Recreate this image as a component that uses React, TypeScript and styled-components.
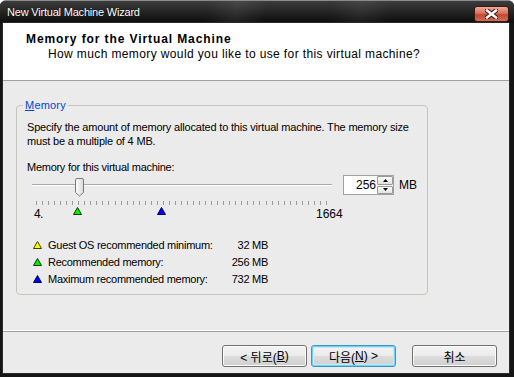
import React from "react";
import styled, { createGlobalStyle } from "styled-components";

const GlobalStyle = createGlobalStyle`
  html, body {
    margin: 0;
    padding: 0;
    background: #ffffff;
  }
  body {
    font-family: "Liberation Sans", "Noto Sans CJK KR", sans-serif;
    font-size: 11px;
    color: #000;
  }
`;

const MIN = 4;
const MAX = 1664;
const VALUE = 256;
const SCALE_LEFT = 33;
const SCALE_WIDTH = 293;
// page x of the slider / scale origin inside the group box
const ORIGIN = 17;

const pos = (mb: number) => SCALE_LEFT + ((mb - MIN) / (MAX - MIN)) * SCALE_WIDTH;

const Window = styled.div`
  width: 514px;
  height: 377px;
  display: flex;
  flex-direction: column;
  background: #151515;
  border-radius: 6px 6px 0 0;
  overflow: hidden;
  box-sizing: border-box;
  border-top: 1px solid #8a8a8a;
`;

const TitleBar = styled.div`
  height: 22px;
  flex: none;
  display: flex;
  align-items: center;
  justify-content: space-between;
  padding: 0 5px 0 7px;
  background:
    linear-gradient(100deg, transparent 0 40%, rgba(255, 255, 255, 0.07) 46%, transparent 52% 64%, rgba(255, 255, 255, 0.06) 70%, transparent 76%),
    linear-gradient(180deg, #3c3c3c 0%, #262626 45%, #0c0c0c 100%);
`;

const TitleText = styled.span`
  color: #ffffff;
  font-size: 11px;
  letter-spacing: -0.2px;
  text-shadow: 0 0 1px #000;
`;

const CloseButton = styled.div`
  width: 33px;
  height: 14px;
  margin-top: 4px;
  border: 1px solid #3a1a14;
  border-radius: 3px;
  background: linear-gradient(180deg, #f0a898 0%, #d8705c 45%, #c04a34 55%, #d06c58 100%);
  display: flex;
  align-items: center;
  justify-content: center;
`;

const Frame = styled.div`
  flex: 1;
  display: flex;
  flex-direction: column;
  margin: 0 5px 4px 3px;
  box-shadow: 0 0 0 1px #2a2a2a;
  min-height: 0;
`;

const Header = styled.div`
  height: 58px;
  flex: none;
  background: #ffffff;
  border-bottom: 1px solid #a0a0a0;
  box-sizing: border-box;
  padding: 9px 0 0 23px;
`;

const Heading = styled.div`
  font-weight: bold;
  font-size: 12px;
  letter-spacing: 0.9px;
  line-height: 14px;
`;

const SubHeading = styled.div`
  margin: 1px 0 0 22px;
  font-size: 12px;
  line-height: 14px;
  letter-spacing: 0.38px;
`;

const Body = styled.div`
  flex: 1;
  background: #ebebeb;
  padding: 24px 0 0 13px;
  border-bottom: 1px solid #a0a0a0;
  box-shadow: inset 0 -1px 0 #ffffff;
`;

const GroupBox = styled.div`
  position: relative;
  width: 412px;
  height: 190px;
  box-sizing: border-box;
  border: 1px solid #c4c4bc;
  border-radius: 4px;
  padding: 14px 0 0 10px;
  letter-spacing: -0.27px;
`;

const GroupLegend = styled.span`
  position: absolute;
  top: -8px;
  left: 6px;
  padding: 0 2px;
  background: #ebebeb;
  color: #0046d5;
  line-height: 14px;
  letter-spacing: 0.2px;

  u {
    text-decoration: underline;
  }
`;

const Description = styled.div`
  line-height: 14px;
  width: 396px;
  letter-spacing: -0.18px;
`;

const FieldLabel = styled.div`
  margin-top: 12px;
  line-height: 14px;
`;

const SliderRow = styled.div`
  margin-top: 1px;
  display: flex;
  align-items: center;
  height: 20px;
`;

const SliderArea = styled.div`
  position: relative;
  width: 312px;
  height: 20px;
  margin-left: -10px;
`;

const Track = styled.div`
  position: absolute;
  left: 15px;
  top: 9px;
  width: 300px;
  height: 2px;
  background: #ffffff;
  border-top: 1px solid #a8a8a8;
  box-sizing: border-box;
`;

const Thumb = styled.svg`
  position: absolute;
  top: 3px;
`;

const SpinBox = styled.div`
  margin-left: 14px;
  width: 51px;
  height: 20px;
  box-sizing: border-box;
  border: 1px solid #a0a0a0;
  background: #ffffff;
  display: flex;
  align-items: center;
  font-size: 12px;
  letter-spacing: 0;
`;

const SpinValue = styled.span`
  flex: 1;
  text-align: right;
  padding-right: 1px;
  line-height: 18px;
`;

const SpinButtons = styled.div`
  width: 16px;
  height: 18px;
  display: flex;
  flex-direction: column;
  gap: 1px;
`;

const SpinButton = styled.div`
  flex: 1;
  border: 1px solid #9a9a9a;
  border-radius: 1px;
  background: linear-gradient(180deg, #ffffff 0%, #e2e2e2 100%);
  display: flex;
  align-items: center;
  justify-content: center;
`;

const Unit = styled.span`
  margin-left: 5px;
  font-size: 12px;
  letter-spacing: 0;
`;

const Scale = styled.div`
  position: relative;
  height: 32px;
  margin-left: -10px;
`;

const Ticks = styled.svg`
  position: absolute;
  top: 6px;
  left: 0;
`;

const ScaleLabel = styled.span<{ $left: number }>`
  position: absolute;
  top: 12px;
  left: ${(p) => p.$left}px;
  line-height: 14px;
  font-size: 12px;
  letter-spacing: 0;
`;

const Marker = styled.svg`
  position: absolute;
  top: 12px;
`;

const LegendList = styled.div`
  margin-top: 9px;
  margin-left: 6px;
  display: grid;
  grid-template-columns: 15px 160px 60px;
  grid-auto-rows: 17px;
  align-items: center;
`;

const LegendText = styled.span`
  white-space: nowrap;
`;

const LegendValue = styled.span`
  text-align: right;
  white-space: nowrap;
`;

const Footer = styled.div`
  height: 41px;
  flex: none;
  background: #ebebeb;
  display: flex;
  justify-content: flex-end;
  align-items: flex-start;
  padding: 13px 12px 0 0;
  box-sizing: border-box;
`;

const Button = styled.button<{ $focused?: boolean; $gap?: number }>`
  width: 85px;
  height: 22px;
  margin-left: ${(p) => p.$gap ?? 0}px;
  border: 1px solid ${(p) => (p.$focused ? "#3d95c9" : "#707070")};
  border-radius: 3px;
  background: linear-gradient(180deg, #f4f4f4 0%, #ebebeb 48%, #dddddd 52%, #cfcfcf 100%);
  box-shadow: ${(p) =>
    p.$focused ? "inset 0 0 0 1px #6fd2f8, inset 0 0 0 2px #c2eafc" : "inset 0 0 0 1px #fbfbfb"};
  font-family: "Liberation Sans", "Noto Sans CJK KR", sans-serif;
  font-size: 12px;
  color: #000;
  padding: 0;
  display: flex;
  align-items: center;
  justify-content: center;

  u {
    text-decoration: underline;
  }
`;

const Triangle = ({ fill, stroke }: { fill: string; stroke: string }) => (
  <svg width="9" height="8" viewBox="0 0 9 8">
    <path d="M4.5 0.5 L8.5 7.5 L0.5 7.5 Z" fill={fill} stroke={stroke} strokeWidth="1" />
  </svg>
);

const TickMarks = () => {
  const ticks = [];
  for (let i = 0; i < 49; i++) {
    const x = 36.5 - ORIGIN + Math.round(i * 6.04);
    ticks.push(<line key={i} x1={x} x2={x} y1={0} y2={4} stroke="#9a9a9a" strokeWidth="1" />);
  }
  return (
    <Ticks width="330" height="5">
      {ticks}
    </Ticks>
  );
};

const legend = [
  { fill: "#ffff00", stroke: "#404000", label: "Guest OS recommended minimum:", value: "32 MB" },
  { fill: "#00ee00", stroke: "#004000", label: "Recommended memory:", value: "256 MB" },
  { fill: "#0000ff", stroke: "#000060", label: "Maximum recommended memory:", value: "732 MB" },
];

const App = () => {
  const thumbLeft = pos(VALUE) - 3 - ORIGIN;
  return (
    <>
      <GlobalStyle />
      <Window>
        <TitleBar>
          <TitleText>New Virtual Machine Wizard</TitleText>
          <CloseButton>
            <svg width="13" height="10" viewBox="0 0 13 10">
              <path d="M2 1.5 L11 8.5 M11 1.5 L2 8.5" stroke="#3b1510" strokeWidth="4.5" strokeLinecap="square" />
              <path d="M2 1.5 L11 8.5 M11 1.5 L2 8.5" stroke="#ffffff" strokeWidth="2.5" strokeLinecap="square" />
            </svg>
          </CloseButton>
        </TitleBar>
        <Frame>
          <Header>
            <Heading>Memory for the Virtual Machine</Heading>
            <SubHeading>How much memory would you like to use for this virtual machine?</SubHeading>
          </Header>
          <Body>
            <GroupBox>
              <GroupLegend>
                <u>M</u>emory
              </GroupLegend>
              <Description>
                Specify the amount of memory allocated to this virtual machine. The memory size must be a
                multiple of 4 MB.
              </Description>
              <FieldLabel>Memory for this virtual machine:</FieldLabel>
              <SliderRow>
                <SliderArea>
                  <Track />
                  <Thumb width="11" height="19" viewBox="0 0 11 19" style={{ left: thumbLeft }}>
                    <defs>
                      <linearGradient id="thumbFill" x1="0" x2="1" y1="0" y2="0">
                        <stop offset="0" stopColor="#ffffff" />
                        <stop offset="1" stopColor="#d8d8d8" />
                      </linearGradient>
                    </defs>
                    <path
                      d="M1.5 2 Q1.5 0.5 3 0.5 L8 0.5 Q9.5 0.5 9.5 2 L9.5 14.5 L5.5 18 L1.5 14.5 Z"
                      fill="url(#thumbFill)"
                      stroke="#7a7a7a"
                    />
                  </Thumb>
                </SliderArea>
                <SpinBox>
                  <SpinValue>256</SpinValue>
                  <SpinButtons>
                    <SpinButton>
                      <svg width="5" height="3" viewBox="0 0 5 3">
                        <path d="M0 3 L2.5 0 L5 3 Z" fill="#000" />
                      </svg>
                    </SpinButton>
                    <SpinButton>
                      <svg width="5" height="3" viewBox="0 0 5 3">
                        <path d="M0 0 L5 0 L2.5 3 Z" fill="#000" />
                      </svg>
                    </SpinButton>
                  </SpinButtons>
                </SpinBox>
                <Unit>MB</Unit>
              </SliderRow>
              <Scale>
                <TickMarks />
                <ScaleLabel $left={34 - ORIGIN}>4</ScaleLabel>
                <ScaleLabel $left={40 - ORIGIN}>.</ScaleLabel>
                <Marker width="9" height="8" style={{ left: pos(256) - 4.5 - ORIGIN }}>
                  <path d="M4.5 0.5 L8.5 7.5 L0.5 7.5 Z" fill="#00ee00" stroke="#004000" />
                </Marker>
                <Marker width="9" height="8" style={{ left: pos(732) - 4.5 - ORIGIN }}>
                  <path d="M4.5 0.5 L8.5 7.5 L0.5 7.5 Z" fill="#0000ff" stroke="#000060" />
                </Marker>
                <ScaleLabel $left={316 - ORIGIN}>1664</ScaleLabel>
              </Scale>
              <LegendList>
                {legend.map((row) => (
                  <React.Fragment key={row.label}>
                    <Triangle fill={row.fill} stroke={row.stroke} />
                    <LegendText>{row.label}</LegendText>
                    <LegendValue>{row.value}</LegendValue>
                  </React.Fragment>
                ))}
              </LegendList>
            </GroupBox>
          </Body>
          <Footer>
            <Button>
              &lt; 뒤로(<u>B</u>)
            </Button>
            <Button $focused $gap={4}>
              다음(<u>N</u>) &gt;
            </Button>
            <Button $gap={16}>취소</Button>
          </Footer>
        </Frame>
      </Window>
    </>
  );
};

export default App;
